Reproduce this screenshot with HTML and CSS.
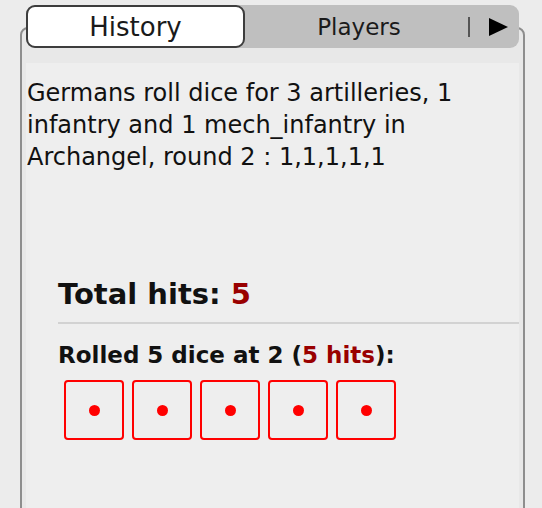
FILE: index.html
```html
<!DOCTYPE HTML>
<html lang="en-US">
<head>
    <title>Battle History</title>
    <meta charset="UTF-8">
    <link rel="stylesheet" href="styles.css">
</head>
<body>
<div class="window">
    <div class="tab-bar">
        <div class="tab active">History</div>
        <div class="tab">Players</div>
        <div class="tab-more">
            <span class="tab-sep"></span>
            <svg class="tab-arrow" width="19" height="18" viewBox="0 0 19 18">
                <polygon points="0,0 19,9 0,18" fill="#000"/>
            </svg>
        </div>
    </div>
    <section class="panel">
        <div class="pane">
            <p class="message">
                Germans roll dice for 3 artilleries, 1 infantry and 1 mech_infantry in Archangel, round 2 : 1,1,1,1,1
            </p>
            <div class="results">
                <h2 class="total">Total hits: <span class="hits">5</span></h2>
                <h3 class="roll">Rolled 5 dice at 2 (<span class="hits">5 hits</span>):</h3>
                <div class="dice">
                    <div class="die"><span class="pip"></span></div>
                    <div class="die"><span class="pip"></span></div>
                    <div class="die"><span class="pip"></span></div>
                    <div class="die"><span class="pip"></span></div>
                    <div class="die"><span class="pip"></span></div>
                </div>
            </div>
        </div>
    </section>
</div>
</body>
</html>
```

FILE: styles.css
```css
* {
    box-sizing: border-box;
}

html, body {
    margin: 0;
    padding: 0;
    background-color: #ececec;
    font-family: "DejaVu Sans", sans-serif;
    color: #111;
}

.window {
    height: 100vh;
    overflow: hidden;
    padding: 5px 17px 0 20px;
}

.tab-bar {
    position: relative;
    z-index: 1;
    display: flex;
    align-items: stretch;
    height: 43px;
    margin: 0 6px;
    background-color: #bfbfbf;
    border-radius: 9px;
}

.tab {
    display: flex;
    align-items: center;
    justify-content: center;
    color: #1a1a1a;
}

.tab.active {
    width: 219px;
    font-size: 26px;
    background-color: #fff;
    border: 2px solid #3d3d3d;
    border-radius: 9px;
}

.tab:not(.active) {
    flex: 1;
    padding-left: 5px;
    font-size: 23px;
}

.tab-more {
    display: flex;
    align-items: center;
    gap: 19px;
    padding-right: 11px;
}

.tab-sep {
    width: 2px;
    height: 20px;
    background-color: #555;
}

.tab-arrow {
    display: block;
}

.panel {
    margin-top: -21px;
    height: 520px;
    padding: 34px 4px 0 4px;
    background-color: #e8e8e8;
    border: 2px solid #8e8e8e;
    border-radius: 8px;
}

.pane {
    height: 100%;
    background-color: #eeeeee;
}

.message {
    margin: 0;
    padding: 14px 0 0 1px;
    font-size: 24px;
    line-height: 32px;
}

.results {
    padding: 103px 0 0 32px;
}

.total {
    margin: 0;
    padding-bottom: 10px;
    font-size: 29px;
    line-height: 36px;
}

.hits {
    color: #990000;
}

.roll {
    margin: 0;
    padding-top: 17px;
    border-top: 2px solid #d2d2d2;
    font-size: 23px;
    line-height: 28px;
}

.dice {
    display: flex;
    gap: 8px;
    padding: 11px 0 0 6px;
}

.die {
    display: flex;
    align-items: center;
    justify-content: center;
    width: 60px;
    height: 60px;
    border: 2px solid #ff0000;
    border-radius: 4px;
}

.pip {
    width: 11px;
    height: 11px;
    border-radius: 50%;
    background-color: #ff0000;
}
```
